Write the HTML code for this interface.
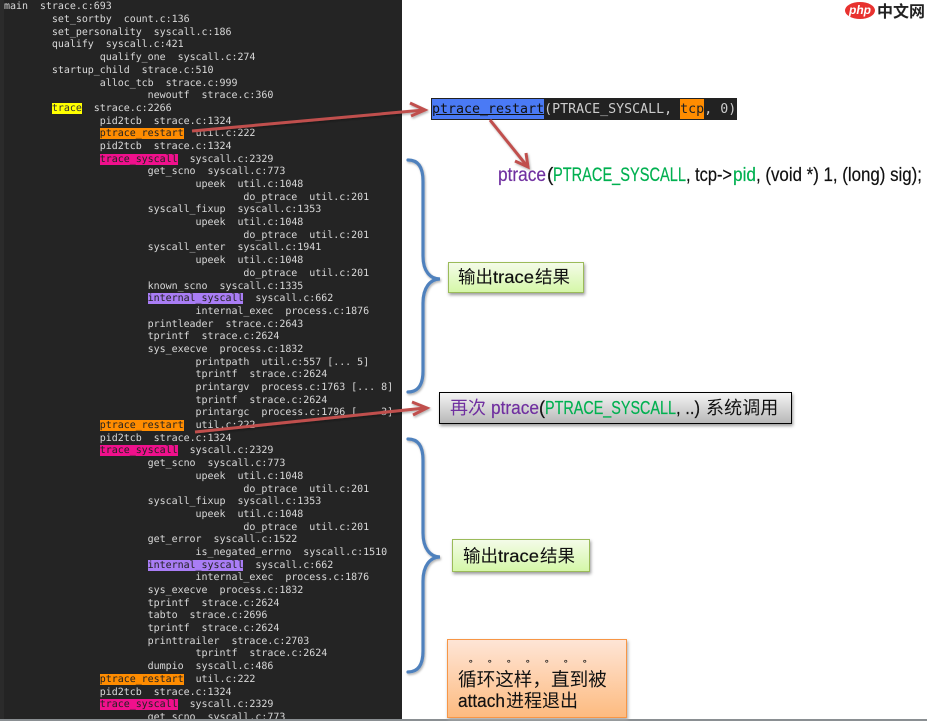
<!DOCTYPE html>
<html lang="zh"><head><meta charset="utf-8"><style>
html,body{margin:0;padding:0;background:#fff;width:927px;height:721px;overflow:hidden}
#panel{position:absolute;left:0;top:0;width:402px;height:719px;background:#242424;overflow:hidden}
#strip{position:absolute;left:0;top:0;width:4px;height:719px;background:#2b2b2b}
pre{position:absolute;left:4px;top:1.4px;margin:0;font:10px/12.68px "DejaVu Sans Mono",monospace;letter-spacing:-.035px;color:#d8d8d8;tab-size:8;filter:blur(.3px);text-rendering:geometricPrecision}
.y{background:#ff0;color:#333}.o{background:#ff8c00;color:#222}.p{background:#f0108c;color:#222}.v{background:#a97df5;color:#222}
#bot{position:absolute;left:0;top:719px;width:927px;height:2px;background:#8a8f92}
.box{position:absolute;box-sizing:border-box}
.g{background:linear-gradient(#f4fbe8,#d5f7a8);border:1px solid #9bbb59;box-shadow:1px 2px 3px #999}
.c{position:absolute;left:431px;top:98px;width:306px;height:22px;background:#222}
.c i{position:absolute;top:1px;height:20px}
.c div{position:absolute;left:1px;top:1px;font:13.3px/22px "DejaVu Sans Mono",monospace;color:#ccc;white-space:pre}
#gb{left:439px;top:392px;width:353px;height:32px;background:linear-gradient(#f4f4f4,#b8b8b8);border:1px solid #000;box-shadow:1px 2px 3px #999}
#ob{left:447px;top:639px;width:180px;height:79px;background:linear-gradient(#fee5d6,#fdbb80);border:1px solid #f79646;box-shadow:1px 2px 3px #aaa}
#logo{position:absolute;left:845px;top:2px;width:30px;height:17px;border-radius:50%;background:#e8322f;color:#fff;font:italic 700 12px/16px "Liberation Sans",sans-serif;text-align:center}
#zw{position:absolute;left:877px;top:0;font:700 16px/20px "WenQuanYi Zen Hei","Noto Sans CJK SC",sans-serif;color:#222;white-space:nowrap}
svg{position:absolute;left:0;top:0}
svg text{font-family:"Liberation Sans","WenQuanYi Zen Hei",sans-serif;fill:#111}
.l{stroke:#111;stroke-width:.2px}
.sl{fill:#7030a0;stroke:#7030a0;stroke-width:.2px}
.sg{fill:#00b050;stroke:#00b050;stroke-width:.2px}
</style></head><body>
<div id="panel"><div id="strip"></div>
<pre>main  strace.c:693
	set_sortby  count.c:136
	set_personality  syscall.c:186
	qualify  syscall.c:421
		qualify_one  syscall.c:274
	startup_child  strace.c:510
		alloc_tcb  strace.c:999
			newoutf  strace.c:360
	<span class="y">trace</span>  strace.c:2266
		pid2tcb  strace.c:1324
		<span class="o">ptrace_restart</span>  util.c:222
		pid2tcb  strace.c:1324
		<span class="p">trace_syscall</span>  syscall.c:2329
			get_scno  syscall.c:773
				upeek  util.c:1048
					do_ptrace  util.c:201
			syscall_fixup  syscall.c:1353
				upeek  util.c:1048
					do_ptrace  util.c:201
			syscall_enter  syscall.c:1941
				upeek  util.c:1048
					do_ptrace  util.c:201
			known_scno  syscall.c:1335
			<span class="v">internal_syscall</span>  syscall.c:662
				internal_exec  process.c:1876
			printleader  strace.c:2643
			tprintf  strace.c:2624
			sys_execve  process.c:1832
				printpath  util.c:557 [... 5]
				tprintf  strace.c:2624
				printargv  process.c:1763 [... 8]
				tprintf  strace.c:2624
				printargc  process.c:1796 [... 3]
		<span class="o">ptrace_restart</span>  util.c:222
		pid2tcb  strace.c:1324
		<span class="p">trace_syscall</span>  syscall.c:2329
			get_scno  syscall.c:773
				upeek  util.c:1048
					do_ptrace  util.c:201
			syscall_fixup  syscall.c:1353
				upeek  util.c:1048
					do_ptrace  util.c:201
			get_error  syscall.c:1522
				is_negated_errno  syscall.c:1510
			<span class="v">internal_syscall</span>  syscall.c:662
				internal_exec  process.c:1876
			sys_execve  process.c:1832
			tprintf  strace.c:2624
			tabto  strace.c:2696
			tprintf  strace.c:2624
			printtrailer  strace.c:2703
				tprintf  strace.c:2624
			dumpio  syscall.c:486
		<span class="o">ptrace_restart</span>  util.c:222
		pid2tcb  strace.c:1324
		<span class="p">trace_syscall</span>  syscall.c:2329
			get_scno  syscall.c:773</pre></div>
<div id="bot"></div>

<div class="c"><i style="left:1px;width:112px;background:#4a7af5"></i><i style="left:249px;width:24px;background:#ff8c00"></i><div><span style="color:#111;text-decoration:underline">ptrace_restart</span>(PTRACE_SYSCALL, <span style="color:#222">tcp</span>, 0)</div></div>

<div class="box g" style="left:448px;top:262px;width:136px;height:31px"></div>
<div class="box g" style="left:452px;top:539px;width:138px;height:33px"></div>
<div class="box" id="gb"></div>
<div class="box" id="ob"></div>

<svg width="927" height="721" viewBox="0 0 927 721" fill="none">
<defs><filter id="s" x="-20%" y="-20%" width="140%" height="140%"><feDropShadow dx="1" dy="1.5" stdDeviation="1" flood-color="#000" flood-opacity=".3"/></filter></defs>
<g stroke="#4f81bd" stroke-width="3.2" stroke-linecap="round" filter="url(#s)">
<path d="M408 160C418 160 423 167 423 181V256C423 271 430 279 440 279C430 279 423 288 423 303V371C423 385 418 392 408 392"/>
<path d="M408 439C418 439 423 446 423 460V533C423 548 430 557 440 557C430 557 423 566 423 581V651C423 665 418 672 408 672"/>
</g>
<g stroke="#c0504d" stroke-width="3" filter="url(#s)">
<path d="M192 131L424 110"/><path d="M410 103L425 110L411 116"/>
<path d="M490 120L527 166"/><path d="M515 161L528 167L526 153"/>
<path d="M195 432L425 408"/><path d="M412 402L427 408L413 415"/>
</g>

<g font-size="19">
<text x="498" y="181" textLength="48" lengthAdjust="spacingAndGlyphs" class="sl">ptrace</text>
<text x="547" y="181" class="l">(</text>
<text x="553" y="181" textLength="133" lengthAdjust="spacingAndGlyphs" class="sg">PTRACE_SYSCALL</text>
<text x="686" y="181" textLength="46" lengthAdjust="spacingAndGlyphs" class="l">, tcp-&gt;</text>
<text x="733" y="181" textLength="23" lengthAdjust="spacingAndGlyphs" class="sg">pid</text>
<text x="756" y="181" textLength="166" lengthAdjust="spacingAndGlyphs" class="l" xml:space="preserve">, (void *) 1, (long) sig);</text>
</g>

<g font-size="17.5">
<text x="458" y="283">输出</text><text x="493" y="283" textLength="41" lengthAdjust="spacingAndGlyphs" class="l">trace</text><text x="535" y="283">结果</text>
<text x="463" y="562">输出</text><text x="498" y="562" textLength="41" lengthAdjust="spacingAndGlyphs" class="l">trace</text><text x="540" y="562">结果</text>
</g>

<g font-size="18">
<text x="450" y="414" class="sl" style="stroke-width:0">再次</text>
<text x="491" y="414" textLength="48" lengthAdjust="spacingAndGlyphs" class="sl">ptrace</text>
<text x="539" y="414" class="l">(</text>
<text x="545" y="414" textLength="131" lengthAdjust="spacingAndGlyphs" class="sg">PTRACE_SYSCALL</text>
<text x="676" y="414" textLength="24" lengthAdjust="spacingAndGlyphs" class="l">, ..)</text>
<text x="706" y="414" letter-spacing=".1">系统调用</text>
</g>

<text x="469 488 507 526 545 564 583" y="662" font-size="9" class="l">。。。。。。。</text>
<g font-size="18.6">
<text x="458" y="686">循环这样，直到被</text>
<text x="458" y="707" textLength="47" lengthAdjust="spacingAndGlyphs" class="l">attach</text>
<text x="506" y="707" font-size="18">进程退出</text>
</g>
</svg>

<div id="logo">php</div><div id="zw">中文网</div>
</body></html>
